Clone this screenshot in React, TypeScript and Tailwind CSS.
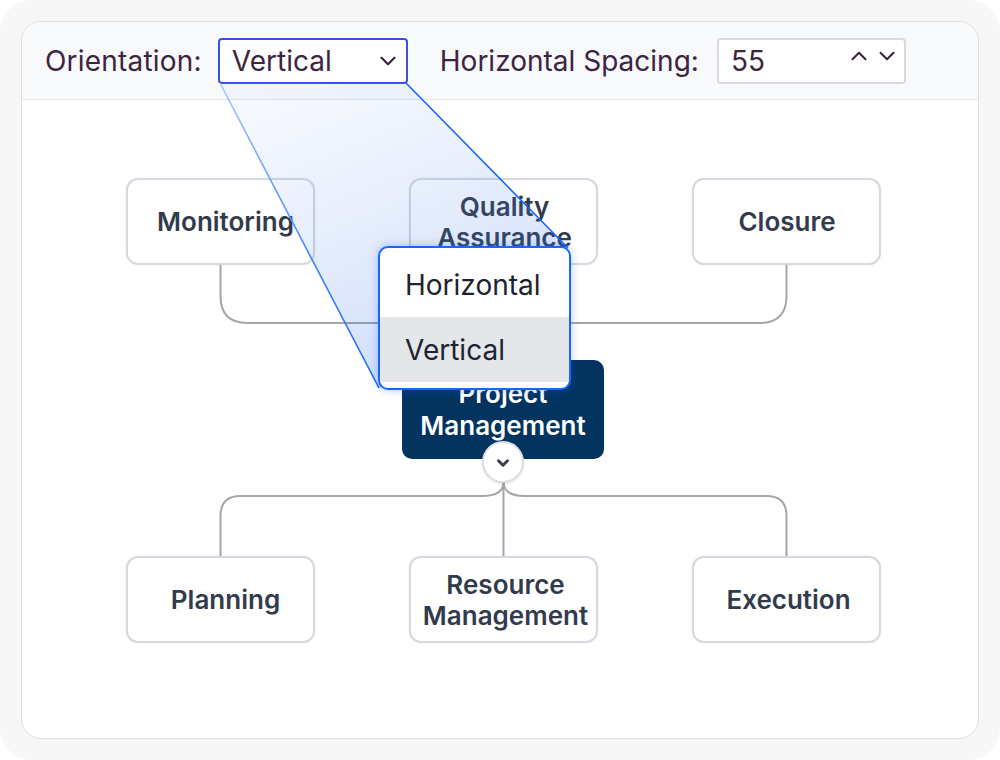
import { ChevronDown, ChevronUp } from "lucide-react"

type Node = {
  label: string[]
  left: number
  top: number
  nudge: string
}

const topRow: Node[] = [
  { label: ["Monitoring"], left: 104, top: 78, nudge: "pl-[10px]" },
  { label: ["Quality", "Assurance"], left: 387, top: 78, nudge: "pl-[2px]" },
  { label: ["Closure"], left: 670, top: 78, nudge: "pl-[1px]" },
]

const bottomRow: Node[] = [
  { label: ["Planning"], left: 104, top: 456, nudge: "pl-[10px]" },
  { label: ["Resource", "Management"], left: 387, top: 456, nudge: "pl-[4px]" },
  { label: ["Execution"], left: 670, top: 456, nudge: "pl-[4px]" },
]

function NodeBox({ node }: { node: Node }) {
  return (
    <div
      className={`absolute w-[189px] h-[87px] rounded-xl border-2 border-[#d6d9df] bg-white flex flex-col items-center justify-center ${node.nudge} text-[26px] leading-[31px] font-semibold text-[#323b4c] shadow-[0_0_2px_rgba(0,0,0,0.08)]`}
      style={{ left: node.left, top: node.top }}
    >
      {node.label.map((l) => (
        <span key={l}>{l}</span>
      ))}
    </div>
  )
}

export default function App() {
  return (
    <div className="w-[1000px] h-[760px] bg-white font-['Inter','Noto_Sans',sans-serif]">
      <div className="w-full h-full rounded-[32px] bg-[#f7f7f8] p-[21px]">
        <div className="relative h-full rounded-[20px] border border-[#dedfe2] bg-white overflow-hidden">
          {/* Header */}
          <div className="h-[78px] bg-[#f8f9fb] border-b border-[#e4e6ea] flex items-center pl-[23px] text-[28px] text-[#3d2440]">
            <span className="tracking-[0.2px]">Orientation:</span>
            <div className="ml-[16px] w-[190px] h-[46px] rounded-[4px] border-2 border-[#3b4ee6] bg-white flex items-center justify-between pl-[12px] pr-[5px]">
              <span>Vertical</span>
              <ChevronDown size={26} strokeWidth={2} className="text-[#3d2440]" />
            </div>
            <span className="ml-[32px]">Horizontal Spacing:</span>
            <div className="ml-[18px] w-[189px] h-[46px] rounded-[4px] border-2 border-[#d9dadf] bg-white flex items-center justify-between pl-[12px] pr-[4px]">
              <span>55</span>
              <div className="flex items-center gap-[2px] -mt-[9px]">
                <ChevronUp size={26} strokeWidth={1.9} />
                <ChevronDown size={26} strokeWidth={1.9} />
              </div>
            </div>
          </div>

          {/* Diagram */}
          <div className="relative h-[640px]">
            <svg className="absolute inset-0" width="956" height="640" fill="none">
              <g stroke="#a6a6a8" strokeWidth="2">
                <path d="M198.5,165 L198.5,196 Q198.5,223 225.5,223 L737.5,223 Q764.5,223 764.5,196 L764.5,165" />
                <path d="M481.5,165 L481.5,260" />
                <path d="M481.5,382 L481.5,456" />
                <path d="M481.5,382 C481.5,392 474,396 460,396 L218.5,396 Q198.5,396 198.5,416 L198.5,456" />
                <path d="M481.5,382 C481.5,392 489,396 503,396 L744.5,396 Q764.5,396 764.5,416 L764.5,456" />
              </g>
            </svg>

            {topRow.map((n) => (
              <NodeBox key={n.label.join()} node={n} />
            ))}

            <div className="absolute left-[380px] top-[260px] w-[202px] h-[99px] rounded-[10px] bg-[#02345f] flex flex-col items-center justify-center text-white text-[26px] leading-[32px] font-semibold">
              <span>Project</span>
              <span>Management</span>
            </div>
            <div className="absolute left-[460px] top-[341px] w-[42px] h-[42px] rounded-full bg-white border-2 border-[#dcdde1] flex items-center justify-center shadow-[0_1px_3px_rgba(0,0,0,0.1)]">
              <ChevronDown size={18} strokeWidth={4} className="text-[#3a3f4b] mt-[1px]" />
            </div>

            {bottomRow.map((n) => (
              <NodeBox key={n.label.join()} node={n} />
            ))}
          </div>

          {/* Zoom callout for the open select */}
          <svg className="absolute left-0 top-0 pointer-events-none" width="956" height="420" fill="none">
            <defs>
              <linearGradient id="fill" x1="260" y1="60" x2="380" y2="360" gradientUnits="userSpaceOnUse">
                <stop offset="0" stopColor="#5b8def" stopOpacity="0.05" />
                <stop offset="1" stopColor="#2f6be8" stopOpacity="0.22" />
              </linearGradient>
              <linearGradient id="edge" x1="198" y1="61" x2="357" y2="366" gradientUnits="userSpaceOnUse">
                <stop offset="0" stopColor="#a9c6ff" />
                <stop offset="0.6" stopColor="#3f80ff" />
                <stop offset="1" stopColor="#1463ff" />
              </linearGradient>
            </defs>
            <polygon points="198,61 384,61 546,226 357,366" fill="url(#fill)" />
            <line x1="198" y1="61" x2="357" y2="366" stroke="url(#edge)" strokeWidth="1.6" />
            <line x1="384" y1="61" x2="546" y2="226" stroke="#1766ff" strokeWidth="1.6" />
          </svg>

          <div className="absolute left-[356px] top-[224px] w-[193px] h-[144px] rounded-[10px] border-2 border-[#1766ff] bg-white py-[4px] overflow-hidden shadow-[0_0_10px_rgba(23,102,255,0.35)] text-[28px] text-[#1d2330]">
            <div className="h-[65px] flex items-center pl-[25px]">Horizontal</div>
            <div className="h-[65px] flex items-center pl-[25px] bg-[#e5e6e9]">Vertical</div>
          </div>
        </div>
      </div>
    </div>
  )
}
